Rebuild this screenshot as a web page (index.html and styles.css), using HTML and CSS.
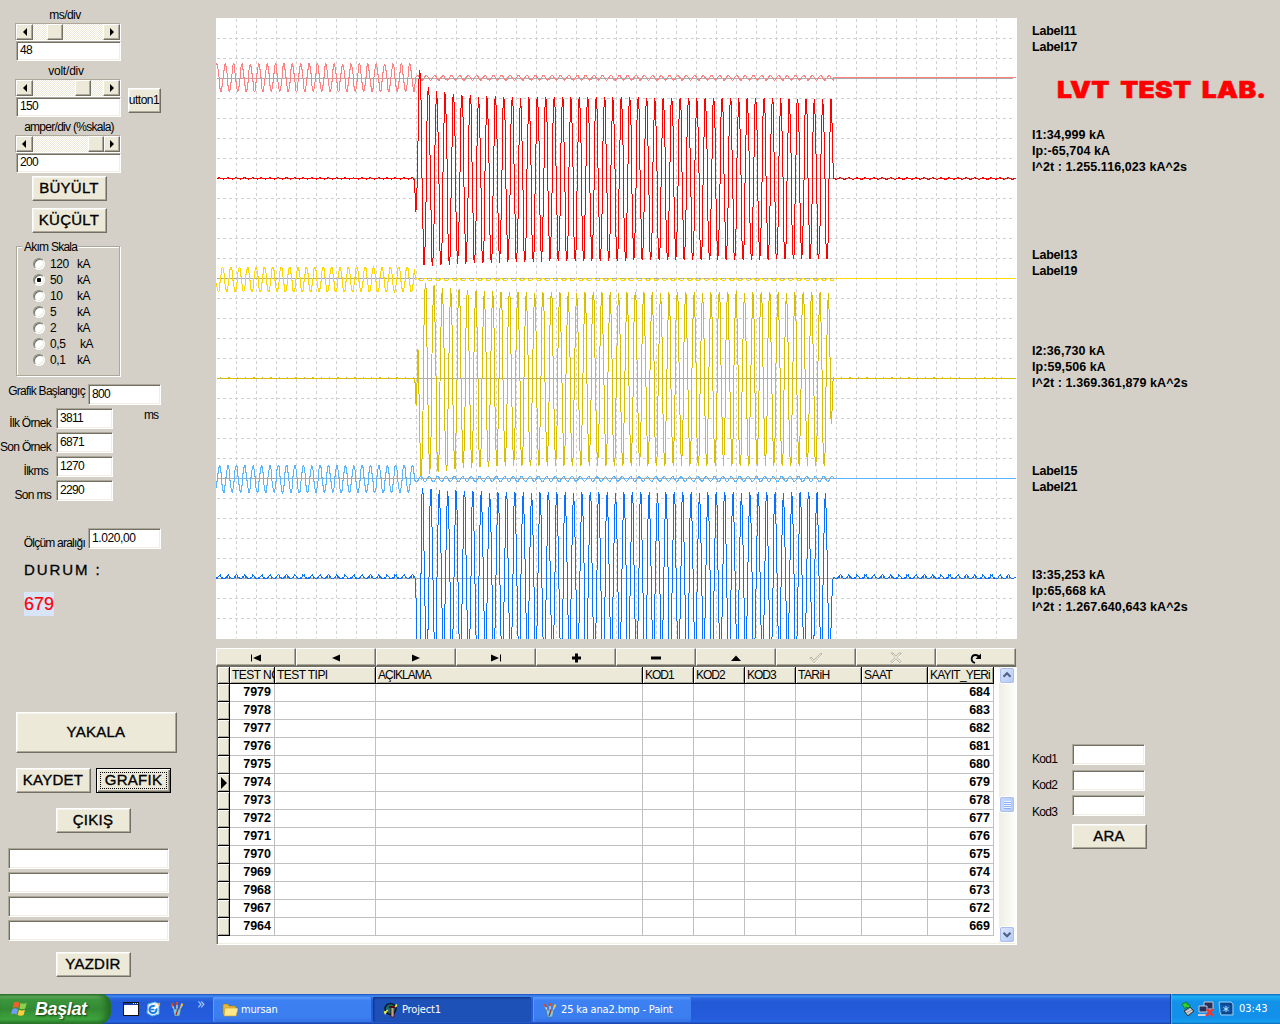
FILE: index.html
```html
<!DOCTYPE html>
<html lang="tr">
<head>
<meta charset="utf-8">
<title>Project1</title>
<link rel="stylesheet" href="styles.css">
</head>
<body>
<main class="form">
  <section class="left">
    <div class="scale">
      <div class="lbl scale-lbl ls-ms">ms/div</div>
      <div class="sb"><span class="sb-btn"><i class="tri l"></i></span><span class="track"><i class="thumb t1"></i></span><span class="sb-btn"><i class="tri r"></i></span></div>
      <div class="edit">48</div>
    </div>
    <div class="scale has-side">
      <div class="lbl scale-lbl ls-volt">volt/div</div>
      <div class="sb"><span class="sb-btn"><i class="tri l"></i></span><span class="track"><i class="thumb t2"></i></span><span class="sb-btn"><i class="tri r"></i></span></div>
      <div class="edit">150</div>
      <button class="btn side-btn"><span>utton1</span></button>
    </div>
    <div class="scale">
      <div class="lbl scale-lbl ls-amp">amper/div (%skala)</div>
      <div class="sb"><span class="sb-btn"><i class="tri l"></i></span><span class="track"><i class="thumb t3"></i></span><span class="sb-btn"><i class="tri r"></i></span></div>
      <div class="edit">200</div>
    </div>
    <button class="btn big-btn">BÜYÜLT</button>
    <button class="btn kucult">KÜÇÜLT</button>
    <fieldset class="group">
      <legend class="lbl">Akım Skala</legend>
      <div class="radio"><i></i><b>120</b><span>kA</span></div>
      <div class="radio on"><i></i><b>50</b><span>kA</span></div>
      <div class="radio"><i></i><b>10</b><span>kA</span></div>
      <div class="radio"><i></i><b>5</b><span>kA</span></div>
      <div class="radio"><i></i><b>2</b><span>kA</span></div>
      <div class="radio"><i></i><b>0,5</b><span class="wide">kA</span></div>
      <div class="radio"><i></i><b>0,1</b><span>kA</span></div>
    </fieldset>
    <div class="field start"><span class="lbl">Grafik Başlangıç</span><div class="edit">800</div></div>
    <div class="field short"><span class="lbl">İlk Örnek</span><div class="edit">3811</div><em class="lbl">ms</em></div>
    <div class="field short"><span class="lbl">Son Örnek</span><div class="edit">6871</div></div>
    <div class="field short ilkms"><span class="lbl">İlkms</span><div class="edit">1270</div></div>
    <div class="field short"><span class="lbl">Son ms</span><div class="edit">2290</div></div>
    <div class="field range"><span class="lbl">Ölçüm aralığı</span><div class="edit">1.020,00</div></div>
    <div class="durum">DURUM :</div>
    <div class="count">679</div>
    <button class="btn yakala">YAKALA</button>
    <div class="pair"><button class="btn">KAYDET</button><button class="btn focus"><span>GRAFIK</span></button></div>
    <button class="btn mid">ÇIKIŞ</button>
    <div class="blank"><div class="edit"></div><div class="edit"></div><div class="edit"></div><div class="edit"></div></div>
    <button class="btn mid print">YAZDIR</button>
  </section>

  <section class="center">
    <svg class="chart" id="chart" width="801" height="621" viewBox="0 0 801 621"></svg>
    <div class="nav">
      <span><svg viewBox="0 0 12 8"><path d="M1 0.500h1v7h-1zM11 0.500v7L3 4z"/></svg></span>
      <span><svg viewBox="0 0 12 8"><path d="M10 0.500v7L2 4z"/></svg></span>
      <span><svg viewBox="0 0 12 8"><path d="M2 0.500v7L10 4z"/></svg></span>
      <span><svg viewBox="0 0 12 8"><path d="M1 0.500v7L9 4zM10 0.500h1v7h-1z"/></svg></span>
      <span><svg class="tall" viewBox="0 0 12 10"><path d="M5 0.500h3v3h3v3h-3v3h-3v-3h-3v-3h3z"/></svg></span>
      <span><svg viewBox="0 0 12 8"><path d="M1 2.500h10v3h-10z"/></svg></span>
      <span><svg viewBox="0 0 12 8"><path d="M1 7L6 1.500L11 7z"/></svg></span>
      <span><svg class="off" viewBox="0 0 14 12"><path class="hi" d="M2 7l3 4 8-9"/><path d="M1 6l1-1 3 3 7-7 1 1-8 9z"/></svg></span>
      <span><svg class="off" viewBox="0 0 14 12"><path class="hi" d="M3 2l9 9M12 2l-9 9"/><path d="M2 1h2l3 3 3-3h2v1L8 5.500l4 4-1 1.500-4-4-4 4-1-1.500 4-4z"/></svg></span>
      <span><svg class="redo" viewBox="0 0 12 12"><path d="M5 11C0 9.500 1 3 5.500 3c2 0 3 .8 3.500 2.500" fill="none" stroke="#000" stroke-width="1.800"/><path d="M11 1.500v5.500H5.500z"/></svg></span>
    </div>
    <div class="table">
      <div class="rows" id="rows">
        <div class="tr th"><span></span><span>TEST NO</span><span>TEST TIPI</span><span class="tight">AÇIKLAMA</span><span class="tight">KOD1</span><span class="tight">KOD2</span><span class="tight">KOD3</span><span>TARiH</span><span>SAAT</span><span>KAYIT_YERi</span></div>
      </div>
      <div class="vbar">
        <span class="vb"><svg viewBox="0 0 16 16"><path d="M4 9.500L8 5.500L12 9.500"/></svg></span>
        <span class="vthumb"></span>
        <span class="vb down"><svg viewBox="0 0 16 16"><path d="M4 6L8 10L12 6"/></svg></span>
      </div>
    </div>
  </section>

  <section class="right">
    <div class="res r1"><p class="lab">Label11</p><p class="lab">Label17</p></div>
    <h1>LVT TEST LAB.</h1>
    <div class="res r2"><p>I1:34,999 kA</p><p>Ip:-65,704 kA</p><p>I^2t : 1.255.116,023 kA^2s</p></div>
    <div class="res r3"><p class="lab">Label13</p><p class="lab">Label19</p></div>
    <div class="res r4"><p>I2:36,730 kA</p><p>Ip:59,506 kA</p><p>I^2t : 1.369.361,879 kA^2s</p></div>
    <div class="res r5"><p class="lab">Label15</p><p class="lab">Label21</p></div>
    <div class="res r6"><p>I3:35,253 kA</p><p>Ip:65,668 kA</p><p>I^2t : 1.267.640,643 kA^2s</p></div>
    <div class="kod k1"><span class="lbl">Kod1</span><div class="edit"></div></div>
    <div class="kod k2"><span class="lbl">Kod2</span><div class="edit"></div></div>
    <div class="kod k3"><span class="lbl">Kod3</span><div class="edit"></div></div>
    <button class="btn ara">ARA</button>
  </section>
</main>

<footer class="taskbar">
  <div class="startbtn">
    <svg width="18" height="18" viewBox="0 0 18 18"><path fill="#f0622d" d="M3 2.500c2-1.200 4-1 5.500 0L7.300 8C5.500 7 3.600 7 1.600 8z"/><path fill="#8fd04a" d="M9.500 3c2 1 4 1 6.200 0l-1.400 5.500c-2 1-4 .8-6 0z"/><path fill="#6f9df5" d="M1.300 9.200c2-1.200 4-1 5.700 0l-1.300 5.400c-1.800-1-3.700-1-5.700 0z"/><path fill="#fbcf3a" d="M8 9.700c2 1 4 1 6 0l-1.400 5.400c-2 1-4 1-6 0z"/></svg>
    <span>Başlat</span>
  </div>
  <div class="quick">
    <svg width="16" height="16" viewBox="0 0 16 16"><path fill="#111" d="M0 1h16v14H0z"/><path fill="#fff" d="M1 4h14v10H1z"/><path fill="#1438a0" d="M1 2h14v2H1z"/><path fill="#fff" d="M10 2h1v1h-1zM12 2h1v1h-1zM14 2h1v1h-1z"/></svg>
    <svg width="16" height="16" viewBox="0 0 16 16"><path fill="#e8f4ff" stroke="#5ab0f0" d="M2 3l7-2 4 2v10l-7 2-5-3z"/><circle cx="7" cy="8.500" r="3.500" fill="none" stroke="#1c7be0" stroke-width="2"/><path stroke="#1c7be0" stroke-width="1.500" d="M4 8.500h6"/><path stroke="#fff" stroke-width="2.500" d="M8 8l5-5"/><path stroke="#f0a040" stroke-width="1.500" d="M12 4l2-2"/></svg>
    <svg width="16" height="16" viewBox="0 0 16 16"><use href="#brushes"/></svg>
    <b>»</b>
  </div>
  <div class="task"><svg width="16" height="16" viewBox="0 0 16 16"><path fill="#e8b93c" stroke="#a87808" stroke-width=".6" d="M1 3l1-1h4l1 2h6l1 1v8H2l-1-1z"/><path fill="#ffe88a" stroke="#c89820" stroke-width=".6" d="M3 6h12l1 1-2 7H2z"/></svg><span class="t-a">mursan</span></div>
  <div class="task active"><svg width="16" height="16" viewBox="0 0 16 16"><circle cx="7.500" cy="7" r="5.500" fill="#1c6a68" stroke="#061c28" stroke-width="1.500"/><path fill="#c8a088" stroke="#400" stroke-width=".7" d="M8 5h3v10H8z"/><path fill="#501010" d="M6 4h7l-1 2H6z"/><path stroke="#f4f040" stroke-width="1.200" d="M1 11l4-3M12 5l2-2"/><path fill="#f4f040" d="M1 9l3 1-2 3zM12 3l2 2V2z"/></svg><span class="t-b">Project1</span></div>
  <div class="task"><svg width="16" height="16" viewBox="0 0 16 16"><g id="brushes"><path stroke="#e8d8b0" stroke-width="1.300" d="M6 10L3 4M8 11V4M10 10l3-6"/><path stroke="#d84820" stroke-width="2" d="M4 5L2.500 2M8 4V1"/><path stroke="#f0c030" stroke-width="2" d="M12 5.500l1.500-3"/><path fill="#7ec8e8" stroke="#406c90" stroke-width=".6" d="M4 8h8l-1.500 7h-5z"/><path stroke="#b02818" stroke-width="1.300" d="M7 14l2-6"/></g></svg><span class="t-c">25 ka ana2.bmp - Paint</span></div>
  <div class="tray">
    <svg width="14" height="16" viewBox="0 0 14 16"><path fill="#9ba2a8" stroke="#30383c" d="M3 10l6-4 4 4-6 5z"/><path stroke="#e0e4e8" d="M5 11l5-3M6 13l5-3"/><path fill="#35d030" stroke="#107018" stroke-width=".7" d="M1 3l5-2v2l3 1-1 3-3-1-1 2z"/></svg>
    <svg width="17" height="16" viewBox="0 0 17 16"><path fill="#28305c" stroke="#c4c8d8" d="M6 1h9v7H6z"/><path fill="#28305c" stroke="#c4c8d8" d="M1 5h8v6H1z"/><path fill="#d0d0dc" d="M0 13h9v2H0z"/><path stroke="#f03830" stroke-width="2.400" d="M9 8l6 7M15 8l-7 7"/></svg>
    <svg width="16" height="16" viewBox="0 0 16 16"><path fill="#125cac" stroke="#9cd0f0" d="M1 1h12l2 2v11H3l-1-3z"/><path fill="none" stroke="#08306c" d="M3 3h10v9H4"/><path stroke="#b0e4ff" d="M8 5v6M5.500 6.500l5 3M5.500 9.500l5-3"/></svg>
    <span>03:43</span>
  </div>
</footer>
<script src="app.js"></script>
</body>
</html>
```

FILE: styles.css
```css
* { box-sizing: border-box; }
body { margin: 0; width: 1280px; height: 1024px; overflow: hidden; background: #d4d0c8; color: #000; font: 12px/14px "Liberation Sans", Arial, sans-serif; }
.form { display: grid; grid-template-columns: 216px 801px 1fr; height: 994px; }
p, h1 { margin: 0; }
.lbl { letter-spacing: -0.55px; white-space: nowrap; line-height: 14px; font-style: normal; }

/* sunken edit boxes and raised buttons */
.edit { height: 21px; background: #fff; border: 1px solid; border-color: #aca899 #fff #fff #aca899; box-shadow: inset 1px 1px #716f64, inset -1px -1px #f1efe2; padding: 2px 0 0 3px; line-height: 15px; letter-spacing: -0.7px; }
.btn { display: flex; align-items: center; justify-content: center; width: 75px; height: 25px; padding: 0 1px 2px 0; border: 1px solid; border-color: #fff #716f64 #716f64 #fff; box-shadow: inset -1px -1px #aca899, inset 1px 1px #f6f4ec; background: #ece9d8; color: #000; font: 15px/18px "Liberation Sans", Arial, sans-serif; letter-spacing: 0.25px; -webkit-text-stroke: 0.35px #000; }

/* left panel */
.left { display: flex; flex-direction: column; align-items: flex-start; padding-top: 8px; }
.scale { display: grid; grid-template-columns: 106px; grid-template-rows: 15px 18px 21px; height: 56px; padding-left: 15px; }
.scale .scale-lbl { text-align: center; padding-right: 4px; }
.scale .ls-ms { padding-right: 6px; }
.scale .ls-volt { letter-spacing: -0.2px; }
.scale .ls-amp { letter-spacing: -0.72px; padding: 0 0 0 2px; }
.scale .edit { width: 105px; margin-left: 1px; height: 20px; padding-top: 1px; }
.has-side { grid-template-columns: 106px 40px; }
.has-side .scale-lbl, .has-side .sb, .has-side .edit { grid-column: 1; }
.side-btn { grid-column: 2; grid-row: 2 / 4; width: 33px; margin: 9px 0 0 7px; overflow: hidden; font-size: 12px; letter-spacing: -0.5px; -webkit-text-stroke: 0; }
.sb { display: flex; height: 18px; border: 1px solid; border-color: #aca899 #fff #fff #aca899; }
.sb-btn { width: 17px; height: 16px; display: grid; place-items: center; background: #ece9d8; border: 1px solid; border-color: #fff #716f64 #716f64 #fff; box-shadow: inset -1px -1px #aca899; }
.tri { border: 4px solid transparent; width: 0; height: 0; }
.tri.l { border-right-color: #000; border-left: 0; }
.tri.r { border-left-color: #000; border-right: 0; }
.track { flex: 1; background: repeating-conic-gradient(#fff 0 25%, #ece9d8 0 50%) 0 0 / 2px 2px; }
.thumb { display: block; width: 16px; height: 16px; background: #ece9d8; border: 1px solid; border-color: #fff #716f64 #716f64 #fff; box-shadow: inset -1px -1px #aca899; }
.t1 { margin-left: 14px; }
.t2 { margin-left: 42px; }
.t3 { margin-left: 55px; }
.big-btn { margin: 0 0 0 32px; }
.kucult { margin: 7px 0 0 32px; }
.group { width: 104px; height: 136px; margin: 7px 0 0 16px; padding: 3px 0 0 16px; border: 1px solid #aca899; box-shadow: 1px 1px #fff, inset 1px 1px #fff; min-width: 0; }
.group legend { height: 13px; line-height: 14px; margin-left: -11px; padding: 0 1px 0 2px; background: #d4d0c8; letter-spacing: -0.75px; }
.radio { display: flex; align-items: center; height: 16px; letter-spacing: -0.4px; }
.radio i { width: 12px; height: 12px; border-radius: 50%; background: #fff; border: 1px solid; border-color: #8c887c #fff #fff #8c887c; box-shadow: inset 1px 1px #716f64, inset -1px -1px #ece9d8; }
.radio.on i { background: radial-gradient(circle, #000 0 2px, #fff 2.5px); }
.radio b { font-weight: 400; width: 27px; margin-left: 5px; }
.radio .wide { padding-left: 3px; }
.field { display: flex; height: 21px; }
.field > .lbl { text-align: right; }
.start { margin-top: 8px; }
.start > .lbl { width: 85px; margin-right: 3px; letter-spacing: -0.7px; }
.start .edit { width: 73px; }
.short { margin-top: 3px; }
.short > span.lbl { width: 51px; margin: 8px 5px 0 0; letter-spacing: -0.7px; }
.ilkms > span.lbl { width: 48px; margin-right: 8px; }
.short .edit { width: 57px; }
.short em { margin: 0 0 0 31px; letter-spacing: -1px; }
.range { margin-top: 27px; }
.range > .lbl { width: 85px; margin: 8px 3px 0 0; letter-spacing: -0.78px; }
.range .edit { width: 73px; letter-spacing: -0.4px; }
.durum { margin: 11px 0 0 24px; height: 20px; font-size: 15px; line-height: 20px; letter-spacing: 1.9px; -webkit-text-stroke: 0.3px #000; }
.count { margin: 12px 0 0 24px; height: 24px; font-size: 18px; line-height: 24px; color: #f00; background: #d8e4f8; -webkit-text-stroke: 0.2px #f00; }
.yakala { width: 161px; height: 41px; margin: 96px 0 0 16px; }
.pair { display: flex; gap: 5px; margin: 15px 0 0 16px; }
.btn.focus { border: 1px solid #000; padding: 0; box-shadow: inset 1px 1px #fff, inset -1px -1px #716f64, inset -2px -2px #aca899; }
.focus span { width: 67px; height: 17px; border: 1px dotted #000; line-height: 14px; text-align: center; }
.btn.mid { margin: 15px 0 0 56px; }
.blank { display: grid; gap: 3px; width: 161px; margin: 15px 0 0 8px; }
.btn.print { margin-top: 11px; }

/* chart, record navigator and table */
.chart { display: block; margin-top: 18px; background: #fff; shape-rendering: crispEdges; }
.nav { display: grid; grid-template-columns: repeat(10, 80px); height: 18px; margin-top: 9px; background: #d4d0c8; }
.nav span { display: grid; place-items: center; background: #ece9d8; border: 1px solid; border-color: #fff #716f64 #716f64 #fff; box-shadow: inset -1px -1px #aca899; }
.nav svg { width: 12px; height: 8px; margin-top: 1px; }
.nav svg.tall { height: 10px; }
.nav svg.redo { height: 12px; }
.nav svg.off { width: 14px; height: 12px; fill: #ece9d8; stroke: #aca899; stroke-width: 0.8; }
.nav .hi { stroke: #fff; stroke-width: 2; fill: none; }
.table { display: flex; justify-content: space-between; height: 279px; background: #fff; border: 1px solid; border-color: #716f64 #fff #fff #aca899; box-shadow: inset 1px 0 #716f64, inset -1px -1px #f1efe2; padding: 0 0 0 1px; }
.rows { width: 776px; }
.tr { display: grid; grid-template-columns: 12px 45px 101px 267px 51px 51px 51px 66px 66px 66px; height: 18px; }
.tr span { border-right: 1px solid #c0c0c0; border-bottom: 1px solid #c0c0c0; font: bold 12.5px/17px "Liberation Sans", Arial, sans-serif; text-align: right; padding-right: 3px; overflow: hidden; white-space: nowrap; }
.tr span:first-child { background: #ece9d8; border-color: #000; box-shadow: inset 1px 1px #fff, inset -1px -1px #aca899; padding: 0; }
.tr .cur { display: grid; place-items: center; }
.tr .cur::before { content: ""; border: 6px solid transparent; border-left-color: #000; border-right: 0; }
.th { height: 17px; }
.th span { background: #ece9d8; border-color: #000; box-shadow: inset 1px 1px #fff, inset -1px -1px #aca899; font: 12px/16px "Liberation Sans", Arial, sans-serif; letter-spacing: -0.55px; text-align: left; padding: 0 0 0 2px; }
.th .tight { letter-spacing: -1px; }
.th span:last-child { letter-spacing: -0.78px; }
.vbar { width: 17px; margin: 0 0 1px 0; display: grid; grid-template-rows: 17px 1fr 17px; background: linear-gradient(90deg, #eeede5, #fefefb); padding-right: 1px; }
.vb, .vthumb { background: linear-gradient(135deg, #dce6ff, #b4c8f6); border: 1px solid #fff; outline: 1px solid #a9bfec; outline-offset: -2px; border-radius: 3px; }
.vb svg { display: block; width: 14px; height: 15px; fill: none; stroke: #4d6185; stroke-width: 2.4; }
.vthumb { height: 17px; margin-top: 112px; background: repeating-linear-gradient(#eef4ff 0 1px, #8cb0f8 1px 2px) 4px 4px / 7px 8px no-repeat, linear-gradient(90deg, #c8d8ff, #b6cbfa); }

/* results */
.right { display: flex; flex-direction: column; align-items: flex-start; padding: 23px 0 0 15px; }
.res { font-weight: bold; font-size: 12.5px; line-height: 16px; white-space: nowrap; }
.res p { letter-spacing: 0.08px; }
.res .lab { letter-spacing: -0.2px; }
h1 { margin: 22px 0 0 25px; height: 26px; font: 900 23px/26px Inter, "Arial Black", sans-serif; color: #f00; white-space: nowrap; letter-spacing: 0.25px; word-spacing: 4.2px; transform-origin: 0 50%; transform: scaleX(1.15); -webkit-text-stroke: 0.5px #f00; }
.r2 { margin-top: 24px; }
.r3 { margin-top: 72px; }
.r4 { margin-top: 64px; }
.r5 { margin-top: 72px; }
.r6 { margin-top: 72px; }
.kod { display: grid; grid-template-columns: 40px 73px; }
.kod .lbl { padding-top: 8px; letter-spacing: -0.7px; }
.k1 { margin-top: 129px; }
.k2 { margin-top: 4px; }
.k3 { margin-top: 3px; }
.k3 .lbl { padding-top: 10px; height: 21px; }
.ara { margin: 8px 0 0 40px; }

/* taskbar */
.taskbar { display: flex; height: 30px; color: #fff; font: 11px/30px "DejaVu Sans Condensed", "DejaVu Sans", sans-serif; background: linear-gradient(#1f4fc0, #3f8cf0 7%, #2a66e0 14%, #2259d6 28%, #245cdc 80%, #2663e2 92%, #1941a5); }
.startbtn { display: flex; align-items: center; width: 111px; padding-left: 11px; gap: 6px; border-radius: 0 10px 12px 0; background: linear-gradient(#2f7030, #62b062 8%, #3c963c 20%, #338a33 50%, #3ea63e 85%, #2c7a2c); box-shadow: inset -5px 0 6px #246a24; font: italic bold 18px/29px "Liberation Sans", Arial, sans-serif; text-shadow: 1px 1px 2px #103810; }
.startbtn span { letter-spacing: -0.4px; }
.quick { display: flex; align-items: center; width: 102px; padding-left: 12px; gap: 7px; }
.quick b { font-size: 15px; font-weight: 400; color: #b8d0ff; line-height: 16px; padding: 0 0 10px 5px; }
.task { display: flex; align-items: center; width: 158px; height: 25px; margin: 3px 2px 0 0; padding-left: 9px; gap: 3px; border-radius: 2px; line-height: 25px; letter-spacing: -0.15px; white-space: nowrap; background: linear-gradient(#5a9bfa, #3c80f2 15%, #3b7ef0 80%, #3472e4); box-shadow: inset 1px 0 #5e9bf8; }
.task.active { background: #1e51b7; box-shadow: inset 1px 1px 2px #10307c; padding-left: 10px; }
.tray { display: flex; align-items: center; width: 110px; margin-left: auto; padding-left: 10px; gap: 3px; border-left: 1px solid #10409c; box-shadow: inset 1px 0 #1cc0f8; background: linear-gradient(#1068c0, #1fb0f4 8%, #1292e8 25%, #1390ea 80%, #16a0f0 93%, #0f68b8); }
.tray span { margin-left: 2px; }
```

FILE: app.js
```js
const svg = document.getElementById("chart");
const NS = "http://www.w3.org/2000/svg";
const PERIOD = 8.393;

function path(d, color, dash) {
  const p = document.createElementNS(NS, "path");
  p.setAttribute("d", d);
  p.setAttribute("fill", "none");
  p.setAttribute("stroke", color);
  if (dash) p.setAttribute("stroke-dasharray", dash);
  svg.appendChild(p);
}

for (let x = 20; x < 800; x += 20) path(`M${x + 0.5} 1V620`, "#d0d0d0", "3 3");
for (let y = 20; y < 620; y += 20) {
  const axis = y % 100 === 60;
  path(`M1 ${y + 0.5}H797`, axis ? "#acacac" : "#d0d0d0", axis ? "" : "3 3");
}

function trace(from, to, color, fn) {
  let d = "";
  for (let x = from; x <= to; x += 0.42) {
    d += (d ? "L" : "M") + (Math.round(x) + 0.5) + " " + (Math.round(fn(x)) + 0.5);
  }
  path(d, color);
}

const wave = (x, peak) => Math.cos((x - peak) / PERIOD * 2 * Math.PI);

// Voltage: full sine before the fault, small residual during it, then flat
function voltage(center, amp, peak, residualPeak, residual, rest, color) {
  trace(0, 799, color, x => {
    if (x < 198.5) return center - amp * wave(x, peak);
    if (x < 617) return center - residual * wave(x, residualPeak);
    return rest;
  });
}
voltage(59.3, 14, 8.67, 209.7, 2.3, 59, "#ff8080");
voltage(261, 12.4, 6, 209, 1.4, 260, "#ffd700");
voltage(460.5, 13.7, 3, 212.7, 2.4, 460, "#5ab4ff");

// Current: noise, then a string of peaks and troughs, then noise
function current(color, head, peak0, top, bottom, tail, quiet) {
  const pts = [...head];
  for (let k = 0; peak0 + k * PERIOD < tail[0][0] - 2; k++) {
    const x = peak0 + k * PERIOD;
    pts.push([x, top(k)]);
    if (x + PERIOD / 2 < tail[0][0] - 1) pts.push([x + PERIOD / 2, bottom(k)]);
  }
  pts.push(...tail);
  trace(0, 799, color, x => {
    if (x < pts[0][0] || x > pts[pts.length - 1][0]) return quiet(x);
    let i = 1;
    while (i < pts.length - 1 && pts[i][0] < x) i++;
    const [x0, y0] = pts[i - 1], [x1, y1] = pts[i];
    const t = (x - x0) / (x1 - x0);
    return y0 + (y1 - y0) * (1 - Math.cos(Math.PI * t)) / 2;
  });
}

current("#ff0000", [[197.5, 160], [199.6, 193], [203.2, 52], [207.7, 247]], 211.8,
  k => 80 - 9 * Math.exp(-k / 2.5) - 2 * Math.exp(-k / 20),
  k => 241 + 6 * Math.exp(-k / 10), [[617, 160]],
  x => 160 - (wave(x, 2.7) > 0.85 ? 1 : 0) + (wave(x, 7.2) > (x > 600 ? 0.8 : 0.97) ? 1 : 0));

current("#d8c000", [[198, 360], [200, 387], [201.3, 330], [204.7, 462]], 209,
  k => 273.5 - 9 * Math.exp(-k / 4), k => 447 + 9 * Math.exp(-k / 4), [[615, 405], [616.5, 360]],
  x => 360 - (wave(x, 4) > 0.96 ? 1 : 0));

current("#0a70ff", [[199, 560], [202, 700]], 206,
  k => 474 - 5 * Math.exp(-k / 5), () => 650, [[616.5, 560]],
  x => {
    const w = wave(x, 3);
    return 559 - (w > 0.8 ? 3 : w > 0.2 ? 1 : 0) + (w < -0.6 ? 1 : 0) + (Math.round(x) % 2 && w > -0.5 ? 1 : 0);
  });

const rows = document.getElementById("rows");
const tests = [7979, 7978, 7977, 7976, 7975, 7974, 7973, 7972, 7971, 7970, 7969, 7968, 7967, 7964];
const places = [684, 683, 682, 681, 680, 679, 678, 677, 676, 675, 674, 673, 672, 669];
tests.forEach((n, i) => {
  const tr = document.createElement("div");
  tr.className = "tr";
  tr.innerHTML = `<span${n === 7974 ? ' class="cur"' : ""}></span><span>${n}</span>` + "<span></span>".repeat(7) + `<span>${places[i]}</span>`;
  rows.appendChild(tr);
});
```
